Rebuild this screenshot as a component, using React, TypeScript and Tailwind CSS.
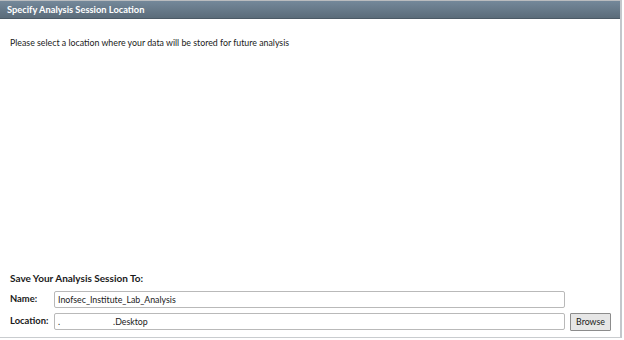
export default function App() {
  return (
    <div className="w-[624px] h-[340px] bg-white relative overflow-hidden font-['Lato',sans-serif] text-[8.8px] text-[#1a1a1a]">
      <div className="flex flex-col h-[338px] w-[622px] border-r-2 border-[#c3c7cb] border-b border-b-[#c9cccf]">
        <div className="h-[19px] border-t border-[#b9bcbf] bg-gradient-to-b from-[#74889a] to-[#5b6c7a] border-b border-b-[#4c5a66] flex items-center px-[7px]">
          <span className="text-white font-bold text-[9.3px]">Specify Analysis Session Location</span>
        </div>
        <div className="pl-[10px] pt-[17px] leading-[14px]">
          Please select a location where your data will be stored for future analysis
        </div>
        <div className="flex-1" />
        <div className="pl-[10px] pb-[7px] flex flex-col">
          <div className="font-bold text-[10px] leading-[14px] mb-[6px]">Save Your Analysis Session To:</div>
          <div className="flex items-center h-[17px] mb-[5px]">
            <span className="w-[44px] shrink-0 font-bold text-[9.4px]">Name:</span>
            <div className="w-[511px] h-[17px] border border-[#b9b9b9] rounded-[2px] px-[3px] flex items-center">
              Inofsec_Institute_Lab_Analysis
            </div>
          </div>
          <div className="flex items-center h-[17px]">
            <span className="w-[44px] shrink-0 font-bold text-[9.4px]">Location:</span>
            <div className="w-[511px] h-[17px] border border-[#b9b9b9] rounded-[2px] px-[3px] flex items-center">
              <span>.</span>
              <span className="ml-[53px]">.Desktop</span>
            </div>
            <button className="ml-[5px] w-[41px] h-[18px] border border-[#8c8c8c] bg-[#e6e6e6] rounded-[1px] text-[8.8px] flex items-center justify-center">
              Browse
            </button>
          </div>
        </div>
      </div>
    </div>
  );
}
